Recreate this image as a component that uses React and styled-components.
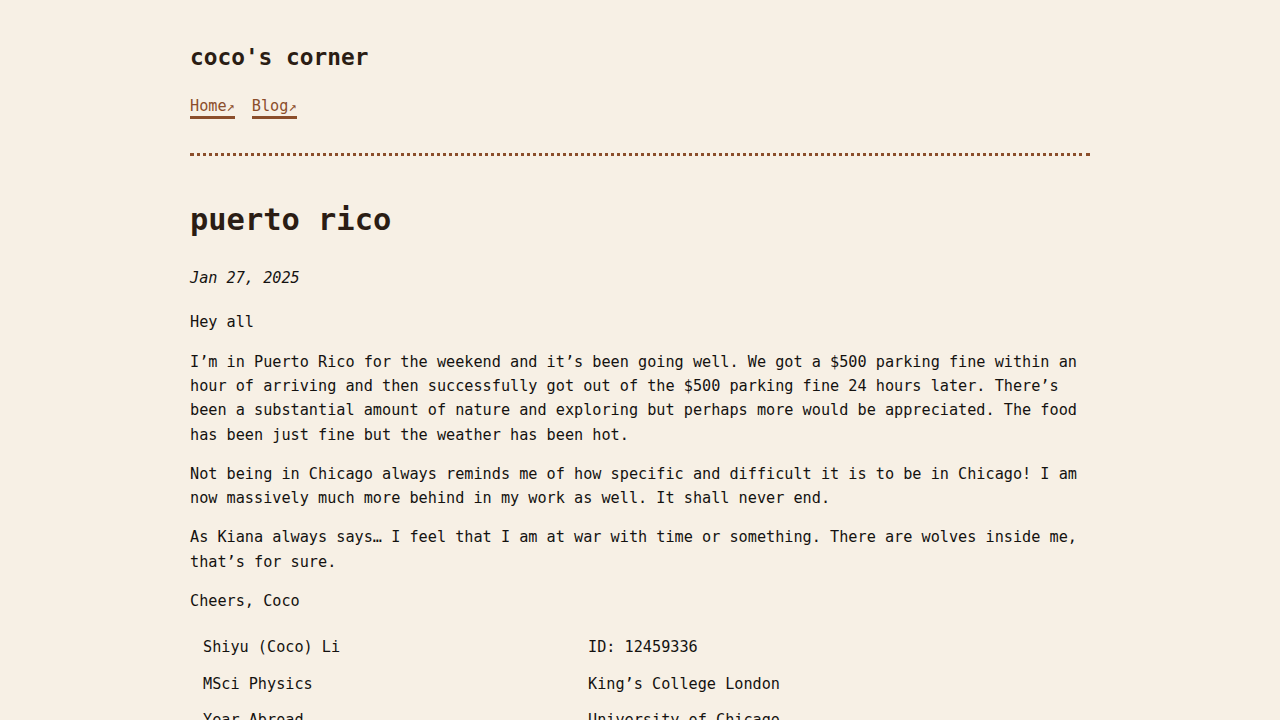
import React from "react";
import styled, { createGlobalStyle } from "styled-components";

const GlobalStyle = createGlobalStyle`
  html { font-size: 15.2px; }
  body {
    margin: 0;
    background: #f7f0e5;
    color: #141210;
    font-family: "DejaVu Sans Mono", "Liberation Mono", monospace;
    line-height: 1.6;
  }
`;

const Page = styled.div`
  max-width: 900px;
  margin: 0 auto;
  padding: 43px 0 40px;
`;

const Header = styled.header`
  padding-bottom: 34px;
  border-bottom: 3px dotted #8b4e2b;
`;

const SiteTitle = styled.div`
  font-size: 1.5rem;
  font-weight: bold;
  color: #2b1d14;
  line-height: 1.25;
  margin-bottom: 26px;
`;

const Nav = styled.nav`
  display: flex;
  gap: 17px;
`;

const NavLink = styled.a`
  color: #8b4e2b;
  text-decoration: none;
  border-bottom: 3px solid #8b4e2b;
  line-height: 19px;
  &::after {
    content: "↗";
    font-size: 0.9em;
  }
`;

const Title = styled.h1`
  font-size: 2rem;
  font-weight: bold;
  color: #2b1d14;
  margin: 46px 0 27px;
  line-height: 1.2;
`;

const Date = styled.p`
  font-style: italic;
  margin: 0 0 20px;
`;

const Para = styled.p`
  margin: 0 0 15px;
`;

const Table = styled.table`
  border-collapse: collapse;
  margin-top: 16px;
  width: 900px;
`;

const Cell = styled.td`
  padding: 6px 13px;
  width: ${(p) => p.$w || "auto"};
  vertical-align: top;
`;

const rows = [
  ["Shiyu (Coco) Li", "ID: 12459336"],
  ["MSci Physics", "King’s College London"],
  ["Year Abroad", "University of Chicago"],
];

export default function App() {
  return (
    <>
      <GlobalStyle />
      <Page>
        <Header>
          <SiteTitle>coco's corner</SiteTitle>
          <Nav>
            <NavLink href="#">Home</NavLink>
            <NavLink href="#">Blog</NavLink>
          </Nav>
        </Header>
        <main>
          <Title>puerto rico</Title>
          <Date>Jan 27, 2025</Date>
          <Para>Hey all</Para>
          <Para>
            I’m in Puerto Rico for the weekend and it’s been going well. We got a $500 parking fine within an hour of arriving and then successfully got out of the $500 parking fine 24 hours later. There’s been a substantial amount of nature and exploring but perhaps more would be appreciated. The food has been just fine but the weather has been hot.
          </Para>
          <Para>
            Not being in Chicago always reminds me of how specific and difficult it is to be in Chicago! I am now massively much more behind in my work as well. It shall never end.
          </Para>
          <Para>
            As Kiana always says… I feel that I am at war with time or something. There are wolves inside me, that’s for sure.
          </Para>
          <Para>Cheers, Coco</Para>
          <Table>
            <tbody>
              {rows.map(([a, b]) => (
                <tr key={a}>
                  <Cell $w="359px">{a}</Cell>
                  <Cell>{b}</Cell>
                </tr>
              ))}
            </tbody>
          </Table>
        </main>
      </Page>
    </>
  );
}
